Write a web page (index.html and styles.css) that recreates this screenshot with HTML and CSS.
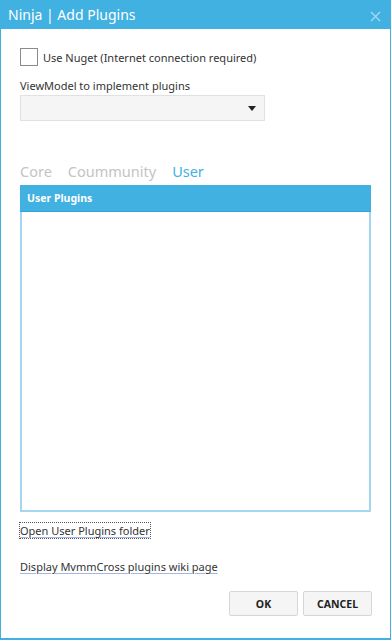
FILE: index.html
```html
<!DOCTYPE html>
<html lang="en">
<head>
    <meta charset="UTF-8">
    <meta name="viewport" content="width=device-width, initial-scale=1.0">
    <link rel="stylesheet" href="styles.css">
</head>
<body>

    <div id="window">
        <div id="titlebar">
            <span class="title">Ninja | Add Plugins</span>
            <svg class="close" width="11" height="11" viewBox="0 0 11 11">
                <path d="M1 1 L10 10 M10 1 L1 10" stroke="#a6d9f1" stroke-width="1.3" fill="none"/>
            </svg>
        </div>

        <div id="content">
            <label class="check-row">
                <span class="checkbox"></span>
                <span>Use Nuget (Internet connection required)</span>
            </label>

            <div class="field-label">ViewModel to implement plugins</div>
            <div class="select">
                <svg width="8" height="5" viewBox="0 0 8 5"><path d="M0 0 H8 L4 5 Z" fill="#222"/></svg>
            </div>

            <div class="tabs">
                <span class="tab">Core</span>
                <span class="tab">Coummunity</span>
                <span class="tab active">User</span>
            </div>

            <div class="list">
                <div class="list-header">User Plugins</div>
                <div class="list-body"></div>
            </div>

            <a class="link focused" href="#">Open User Plugins folder</a>
            <a class="link wiki" href="#">Display MvmmCross plugins wiki page</a>

            <div class="buttons">
                <button>OK</button>
                <button>CANCEL</button>
            </div>
        </div>
    </div>

</body>
</html>
```

FILE: styles.css
```css
body {
    margin: 0;
    font-family: "Noto Sans", "Open Sans", sans-serif;
    background: #fff;
}

#window {
    width: 391px;
    height: 640px;
    box-sizing: border-box;
    border: 1px solid #41b1e1;
    border-bottom-width: 2px;
    display: flex;
    flex-direction: column;
}

#titlebar {
    height: 28px;
    flex-shrink: 0;
    background-color: #41b1e1;
    display: flex;
    align-items: center;
    justify-content: space-between;
    padding: 0 9px 0 7px;
}

.title {
    color: #fff;
    font-size: 14px;
    line-height: 28px;
}

.close {
    margin-top: 2px;
}

#content {
    flex: 1;
    padding: 19px 18px 0 19px;
    display: flex;
    flex-direction: column;
    font-size: 11px;
    color: #333;
}

.check-row {
    display: flex;
    align-items: center;
    height: 18px;
}

.checkbox {
    width: 16px;
    height: 16px;
    border: 1px solid #8a8a8a;
    margin-right: 5px;
}

.field-label {
    margin-top: 11px;
    height: 17px;
    line-height: 17px;
}

.select {
    margin-top: 1px;
    width: 245px;
    height: 26px;
    box-sizing: border-box;
    border: 1px solid #e1e1e1;
    background-color: #f5f5f5;
    display: flex;
    align-items: center;
    justify-content: flex-end;
    padding-right: 8px;
}

.tabs {
    margin-top: 40px;
    display: flex;
    gap: 16px;
    font-size: 14.5px;
    line-height: 20px;
    height: 22px;
}

.tab {
    color: #c4c4c4;
}

.tab.active {
    color: #41b1e1;
}

.list {
    margin-top: 2px;
    width: 351px;
    height: 327px;
    box-sizing: border-box;
    border: 2px solid #a4d6f0;
    border-top: none;
    display: flex;
    flex-direction: column;
}

.list-header {
    height: 26px;
    margin: 0 -2px;
    background-color: #41b1e1;
    border-bottom: 1px solid #2ea6dc;
    color: #fff;
    font-weight: bold;
    font-size: 10.5px;
    line-height: 26px;
    padding-left: 7px;
}

.list-body {
    flex: 1;
}

.link {
    align-self: flex-start;
    color: #333;
    font-size: 11px;
    text-decoration: underline;
    text-decoration-color: #a3b8e8;
    text-underline-offset: 2px;
}

.link.focused {
    margin-top: 11px;
    outline: 1px dotted #555;
    line-height: 15px;
}

.link.wiki {
    margin-top: 21px;
    line-height: 15px;
}

.buttons {
    margin-top: 17px;
    display: flex;
    justify-content: flex-end;
    gap: 5px;
}

button {
    width: 69px;
    height: 25px;
    background-color: #f5f5f5;
    border: 1px solid #d6d6d6;
    border-radius: 2px;
    font-family: "Noto Sans", sans-serif;
    font-weight: bold;
    font-size: 10.5px;
    color: #222;
    padding: 0;
}
```
